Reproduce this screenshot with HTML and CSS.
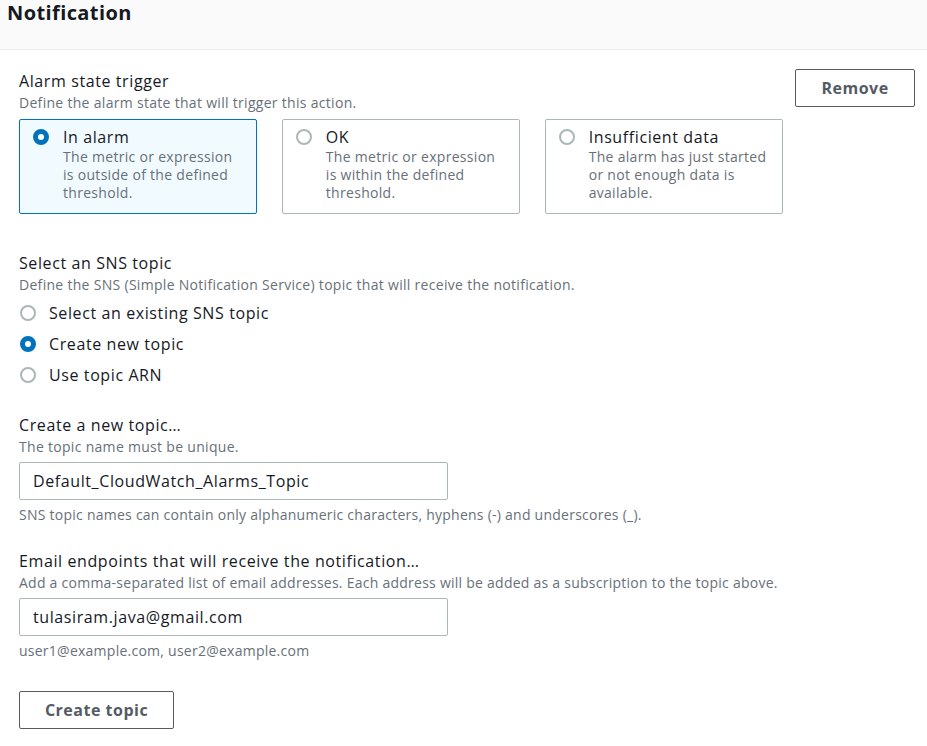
FILE: index.html
```html
<!DOCTYPE html>
<html lang="en">
<head>
<meta charset="utf-8">
<title>Notification</title>
<link rel="stylesheet" href="styles.css">
</head>
<body>
<header class="panel-header">
  <h2 class="panel-title">Notification</h2>
</header>
<main class="panel-body">
  <section class="trigger-row">
    <div class="field">
      <div class="label">Alarm state trigger</div>
      <div class="desc">Define the alarm state that will trigger this action.</div>
      <div class="tiles">
        <div class="tile selected">
          <span class="radio checked"></span>
          <div class="tile-text">
            <div class="tile-title">In alarm</div>
            <div class="tile-desc">The metric or expression is outside of the defined threshold.</div>
          </div>
        </div>
        <div class="tile">
          <span class="radio"></span>
          <div class="tile-text">
            <div class="tile-title">OK</div>
            <div class="tile-desc">The metric or expression is within the defined threshold.</div>
          </div>
        </div>
        <div class="tile">
          <span class="radio"></span>
          <div class="tile-text">
            <div class="tile-title">Insufficient data</div>
            <div class="tile-desc">The alarm has just started or not enough data is available.</div>
          </div>
        </div>
      </div>
    </div>
    <button class="btn btn-remove">Remove</button>
  </section>

  <section class="field sns">
    <div class="label">Select an SNS topic</div>
    <div class="desc">Define the SNS (Simple Notification Service) topic that will receive the notification.</div>
    <div class="radio-list">
      <div class="radio-row"><span class="radio"></span><span>Select an existing SNS topic</span></div>
      <div class="radio-row"><span class="radio checked"></span><span>Create new topic</span></div>
      <div class="radio-row"><span class="radio"></span><span>Use topic ARN</span></div>
    </div>
  </section>

  <section class="field topic">
    <div class="label">Create a new topic…</div>
    <div class="desc">The topic name must be unique.</div>
    <div class="input">Default_CloudWatch_Alarms_Topic</div>
    <div class="hint">SNS topic names can contain only alphanumeric characters, hyphens (-) and underscores (_).</div>
  </section>

  <section class="field email">
    <div class="label">Email endpoints that will receive the notification…</div>
    <div class="desc desc-long">Add a comma-separated list of email addresses. Each address will be added as a subscription to the topic above.</div>
    <div class="input">tulasiram.java@gmail.com</div>
    <div class="hint">user1@example.com, user2@example.com</div>
  </section>

  <button class="btn btn-create">Create topic</button>
</main>
</body>
</html>
```

FILE: styles.css
```css
* { box-sizing: border-box; }

html, body {
  margin: 0;
  padding: 0;
  background: #ffffff;
  font-family: "Open Sans", "Noto Sans", Arial, sans-serif;
  color: #16191f;
}

.panel-header {
  height: 50px;
  background: #fafafa;
  border-bottom: 1px solid #eaeded;
  padding: 0 0 0 7px;
}

.panel-title {
  margin: 0;
  font-size: 20px;
  line-height: 26px;
  font-weight: 700;
  letter-spacing: 0.4px;
  color: #16191f;
}

.panel-body {
  padding: 20px 12px 20px 19px;
}

.label {
  font-size: 16px;
  line-height: 22px;
  letter-spacing: 0.6px;
  color: #16191f;
}

.desc {
  margin-top: 1px;
  font-size: 14px;
  line-height: 20px;
  letter-spacing: 0.3px;
  color: #687078;
}

.desc-long {
  letter-spacing: 0.25px;
}

.hint {
  margin-top: 6px;
  font-size: 14px;
  line-height: 18px;
  letter-spacing: 0.25px;
  color: #687078;
}

.trigger-row {
  display: flex;
  justify-content: space-between;
  align-items: flex-start;
}

.tiles {
  display: grid;
  grid-template-columns: repeat(3, 238.33px);
  column-gap: 24.5px;
  margin-top: 6px;
}

.tile {
  display: flex;
  align-items: flex-start;
  gap: 14px;
  border: 1px solid #aab7b8;
  border-radius: 2px;
  padding: 6px 13px 11px 13px;
  background: #ffffff;
}

.tile.selected {
  border-color: #0073bb;
  background: #f1faff;
}

.tile .radio {
  margin-top: 3px;
}

.tile-title {
  font-size: 16px;
  line-height: 22px;
  letter-spacing: 0.6px;
  color: #16191f;
}

.tile-desc {
  font-size: 14px;
  line-height: 18px;
  letter-spacing: 0.3px;
  color: #687078;
}

.radio {
  flex: none;
  display: inline-block;
  width: 16px;
  height: 16px;
  border-radius: 50%;
  border: 2px solid #aab7b8;
  background: #ffffff;
}

.radio.checked {
  border: 5px solid #0073bb;
  background: #ffffff;
}

.btn {
  font-family: inherit;
  font-size: 16px;
  font-weight: 700;
  letter-spacing: 0.5px;
  color: #545b64;
  background: #ffffff;
  border: 1px solid #545b64;
  border-radius: 2px;
  height: 38px;
  padding: 0 16px;
  cursor: pointer;
}

.btn-remove {
  width: 120px;
  margin-top: -1px;
}

.sns {
  margin-top: 38px;
}

.radio-list {
  display: flex;
  flex-direction: column;
  gap: 9px;
  margin-top: 7px;
}

.radio-row {
  display: flex;
  align-items: center;
  gap: 13px;
  font-size: 16px;
  line-height: 22px;
  letter-spacing: 0.6px;
  padding-left: 1px;
}

.topic {
  margin-top: 28px;
}

.email {
  margin-top: 26px;
}

.input {
  width: 429px;
  height: 38px;
  margin-top: 5px;
  border: 1px solid #aab7b8;
  border-radius: 2px;
  padding: 0 13px;
  font-size: 16px;
  line-height: 36px;
  letter-spacing: 0.6px;
  color: #16191f;
}

.btn-create {
  display: block;
  width: 155px;
  margin-top: 31px;
}
```
